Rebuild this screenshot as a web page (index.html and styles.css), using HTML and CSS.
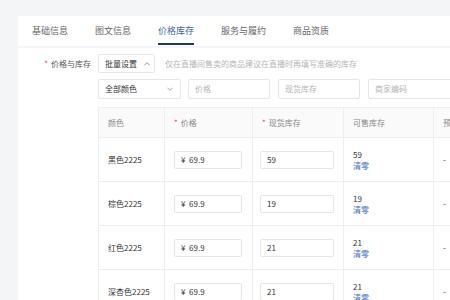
FILE: index.html
```html
<!DOCTYPE html>
<html>
<head>
  <meta charset="utf-8">
  <title>价格库存</title>
  <link rel="stylesheet" href="styles.css">
</head>
<body>
  <div class="page">
    <div class="card tabs">
      <div class="tab">基础信息</div>
      <div class="tab">图文信息</div>
      <div class="tab active">价格库存</div>
      <div class="tab">服务与履约</div>
      <div class="tab">商品资质</div>
    </div>

    <div class="card form">
      <div class="form-row">
        <div class="form-label"><span class="req">*</span>价格与库存</div>
        <div class="form-body">
          <div class="batch-line">
            <button class="batch-btn">批量设置
              <svg width="8" height="8" viewBox="0 0 8 8"><path d="M1.5 5.2 L4 2.7 L6.5 5.2" fill="none" stroke="#888" stroke-width="0.9"/></svg>
            </button>
            <span class="hint">仅在直播间售卖的商品建议在直播时再填写准确的库存</span>
          </div>

          <div class="batch-fields">
            <div class="select">全部颜色
              <svg width="8" height="8" viewBox="0 0 8 8"><path d="M1.5 2.8 L4 5.3 L6.5 2.8" fill="none" stroke="#999" stroke-width="0.9"/></svg>
            </div>
            <div class="field">价格</div>
            <div class="field">现货库存</div>
            <div class="field wide">商家编码</div>
          </div>

          <table class="sku-table">
            <thead>
              <tr>
                <th class="c-color">颜色</th>
                <th class="c-price"><span class="req">*</span>价格</th>
                <th class="c-stock"><span class="req">*</span>现货库存</th>
                <th class="c-sale">可售库存</th>
                <th class="c-keep">预留库存</th>
              </tr>
            </thead>
            <tbody>
              <tr>
                <td>黑色2225</td>
                <td><div class="cell-input">¥&nbsp; 69.9</div></td>
                <td class="stock"><div class="cell-input">59</div></td>
                <td><div>59</div><a class="link">清零</a></td>
                <td class="dash">-</td>
              </tr>
              <tr>
                <td>棕色2225</td>
                <td><div class="cell-input">¥&nbsp; 69.9</div></td>
                <td class="stock"><div class="cell-input">19</div></td>
                <td><div>19</div><a class="link">清零</a></td>
                <td class="dash">-</td>
              </tr>
              <tr>
                <td>红色2225</td>
                <td><div class="cell-input">¥&nbsp; 69.9</div></td>
                <td class="stock"><div class="cell-input">21</div></td>
                <td><div>21</div><a class="link">清零</a></td>
                <td class="dash">-</td>
              </tr>
              <tr>
                <td>深杏色2225</td>
                <td><div class="cell-input">¥&nbsp; 69.9</div></td>
                <td class="stock"><div class="cell-input">21</div></td>
                <td><div>21</div><a class="link">清零</a></td>
                <td class="dash">-</td>
              </tr>
            </tbody>
          </table>
        </div>
      </div>
    </div>
  </div>
</body>
</html>
```

FILE: styles.css
```css
:root {
  --bg: #f4f5f7;
  --text: #333;
  --muted: #999;
  --placeholder: #b5b5b5;
  --border: #e6e6e6;
  --active: #3f63a6;
  --underline: #203563;
  --req: #f2395a;
  --link: #3e6fc4;
}

body {
  margin: 0;
  background: var(--bg);
  font-family: "Noto Sans CJK SC", "Noto Sans", sans-serif;
  color: var(--text);
  overflow: hidden;
}

.page {
  padding: 16px 0 0 18px;
  width: 600px;
}

.card {
  background: white;
}

.tabs {
  display: flex;
  height: 30px;
  padding-left: 14px;
  gap: 27px;
  margin-bottom: 2px;
}

.tab {
  font-size: 9px;
  color: #666;
  line-height: 30px;
  position: relative;
}

.tab.active {
  color: var(--active);
}

.tab.active::after {
  content: "";
  position: absolute;
  left: 0;
  right: 0;
  bottom: 1px;
  height: 2px;
  background: var(--underline);
}

.form {
  padding-top: 6px;
  height: 400px;
}

.form-row {
  display: flex;
}

.form-label {
  width: 73px;
  padding-right: 7px;
  text-align: right;
  font-size: 8px;
  color: #555;
  line-height: 19px;
}

.req {
  color: var(--req);
  margin-right: 3px;
}

.batch-line {
  display: flex;
  align-items: center;
  gap: 10px;
  height: 19px;
}

.batch-btn {
  width: 57px;
  height: 19px;
  padding: 0 0 0 6px;
  border: 1px solid var(--border);
  border-radius: 2px;
  background: white;
  font-family: inherit;
  font-size: 8px;
  color: var(--text);
  display: flex;
  align-items: center;
  gap: 6px;
}

.hint {
  font-size: 8px;
  color: var(--placeholder);
}

.batch-fields {
  display: flex;
  gap: 7px;
  margin-top: 6px;
}

.select,
.field {
  height: 20px;
  box-sizing: border-box;
  border: 1px solid var(--border);
  border-radius: 2px;
  font-size: 8px;
  line-height: 18px;
  padding: 0 6px;
}

.select {
  width: 83px;
  display: flex;
  align-items: center;
  justify-content: space-between;
  color: var(--text);
}

.field {
  width: 82px;
  color: var(--placeholder);
  margin-right: 1px;
}

.field.wide {
  width: 110px;
}

.sku-table {
  margin-top: 8px;
  border-collapse: collapse;
  border: 1px solid #eee;
  font-size: 8px;
  table-layout: fixed;
}

.sku-table th {
  background: #fafafa;
  color: #888;
  font-weight: normal;
  text-align: left;
  height: 29px;
  padding: 0 0 0 9px;
  border-right: 1px solid #eee;
  border-bottom: 1px solid #eee;
}

.sku-table td {
  height: 43px;
  padding: 0 0 0 9px;
  border-right: 1px solid #eee;
  border-bottom: 1px solid #eee;
  color: var(--text);
  line-height: 11px;
}

.sku-table td.stock {
  padding-left: 7px;
}

.c-color { width: 56px; }
.c-price { width: 78px; }
.c-stock { width: 81px; }
.c-sale { width: 80px; }
.c-keep { width: 80px; }

.cell-input {
  width: 68px;
  height: 18px;
  box-sizing: border-box;
  border: 1px solid var(--border);
  border-radius: 2px;
  padding: 0 6px;
  line-height: 16px;
}

.stock .cell-input {
  width: 74px;
}

.link {
  color: var(--link);
}

.dash {
  color: #999;
}
```
